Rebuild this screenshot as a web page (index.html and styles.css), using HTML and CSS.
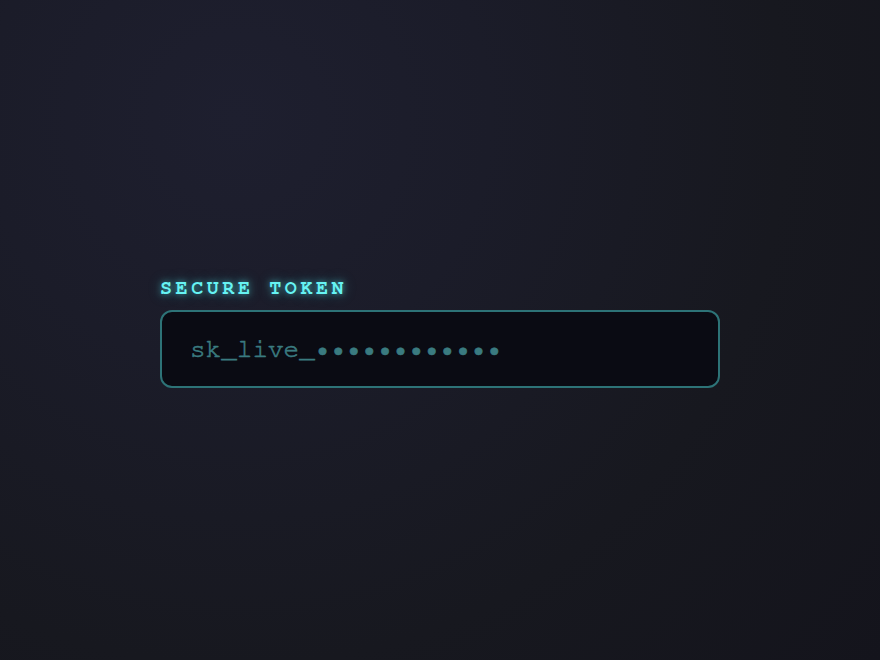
FILE: index.html
```html
<!DOCTYPE html>
<html lang="en">
<head>
<meta charset="utf-8">
<title>Secure Token</title>
<link rel="stylesheet" href="styles.css">
</head>
<body>
<main class="stage">
  <div class="field">
    <label class="field-label" for="token">SECURE TOKEN</label>
    <div class="token-box" id="token">
      <span class="token-prefix">sk_live_</span><span class="token-mask">••••••••••••</span>
    </div>
  </div>
</main>
</body>
</html>
```

FILE: styles.css
```css
html, body {
  margin: 0;
  padding: 0;
  height: 100%;
}

body {
  background: radial-gradient(circle at 27% 18%, #1e1f2f 0%, #1b1c29 30%, #17181f 65%, #14141c 100%);
  font-family: "FreeMono", "Liberation Mono", "Courier New", monospace;
}

.stage {
  height: 100%;
  display: flex;
  align-items: center;
  justify-content: center;
}

.field {
  width: 560px;
  display: flex;
  flex-direction: column;
  gap: 13px;
  margin-top: 7px;
}

.field-label {
  font-size: 20px;
  font-weight: bold;
  line-height: 18px;
  letter-spacing: 3.6px;
  color: #66f3f3;
  text-shadow: 0 0 6px rgba(80, 230, 235, 0.65), 0 0 14px rgba(80, 230, 235, 0.35);
}

.token-box {
  box-sizing: border-box;
  height: 78px;
  border: 2px solid #2d7377;
  border-radius: 12px;
  background: #0a0b13;
  padding: 0 28px;
  display: flex;
  align-items: center;
  font-size: 26px;
  color: #3a7b80;
  -webkit-text-stroke: 0.6px #3a7b80;
}
```
